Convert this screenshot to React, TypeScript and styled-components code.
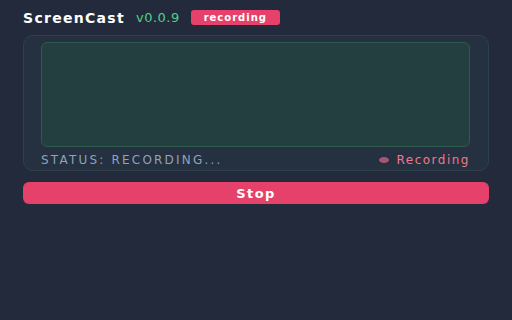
import React from 'react';
import styled, { createGlobalStyle } from 'styled-components';

const GlobalStyle = createGlobalStyle`
html, body {
  margin: 0;
  padding: 0;
  background: #232a3c;
  font-family: "DejaVu Sans", "Liberation Sans", sans-serif;
}
`;

const Page = styled.div`
width: 512px;
height: 320px;
box-sizing: border-box;
padding: 10px 23px;
display: flex;
flex-direction: column;
`;

const Header = styled.div`
display: flex;
align-items: center;
height: 15px;
gap: 11px;
`;

const Title = styled.span`
color: #ffffff;
font-weight: bold;
font-size: 14px;
letter-spacing: 1.3px;
`;

const Version = styled.span`
color: #4fd18b;
font-size: 13px;
letter-spacing: 0.5px;
`;

const Badge = styled.span`
background: #e6416a;
color: #ffffff;
font-weight: bold;
font-size: 10px;
letter-spacing: 1px;
height: 15px;
width: 89px;
border-radius: 3px;
display: flex;
align-items: center;
justify-content: center;
`;

const Panel = styled.div`
margin-top: 10px;
height: 136px;
box-sizing: border-box;
background: #253040;
border: 1px solid #2e404a;
border-radius: 10px;
padding: 6px 18px 0 17px;
display: flex;
flex-direction: column;
`;

const Preview = styled.div`
height: 105px;
box-sizing: border-box;
background: #243f40;
border: 1px solid #2f5a4e;
border-radius: 6px;
`;

const StatusRow = styled.div`
flex: 1;
display: flex;
align-items: center;
justify-content: space-between;
padding-top: 3px;
`;

const StatusText = styled.span`
color: #8ea3bd;
font-size: 12px;
letter-spacing: 2.2px;
`;

const Indicator = styled.span`
display: flex;
align-items: center;
gap: 7px;
color: #f07a8c;
font-size: 12px;
letter-spacing: 1.5px;
`;

const Dot = styled.span`
width: 10px;
height: 6px;
border-radius: 50%;
background: #a85572;
`;

const StopButton = styled.button`
margin-top: 11px;
height: 22px;
border: none;
border-radius: 6px;
background: #e6416a;
color: #ffffff;
font-family: "DejaVu Sans", "Liberation Sans", sans-serif;
font-weight: bold;
font-size: 13px;
letter-spacing: 1.4px;
cursor: pointer;
`;

const App: React.FC = () => (
  <>
    <GlobalStyle />
    <Page>
      <Header>
        <Title>ScreenCast</Title>
        <Version>v0.0.9</Version>
        <Badge>recording</Badge>
      </Header>
      <Panel>
        <Preview />
        <StatusRow>
          <StatusText>STATUS: RECORDING...</StatusText>
          <Indicator>
            <Dot />
            Recording
          </Indicator>
        </StatusRow>
      </Panel>
      <StopButton type="button">Stop</StopButton>
    </Page>
  </>
);

export default App;
